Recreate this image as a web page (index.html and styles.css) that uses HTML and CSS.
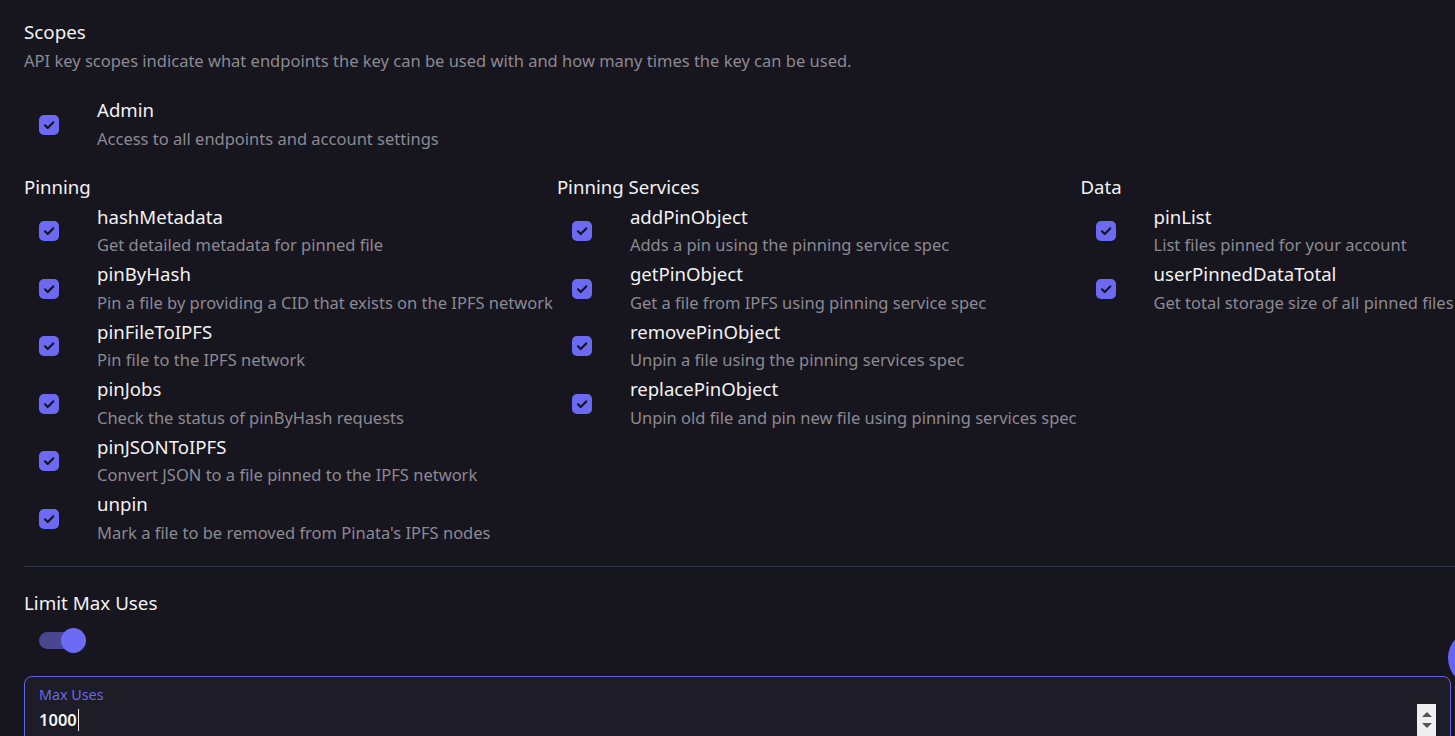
FILE: index.html
```html
<!DOCTYPE html>
<html lang="en">
<head>
<meta charset="utf-8">
<title>Scopes</title>
<link rel="stylesheet" href="styles.css">
</head>
<body>
<main class="page">
  <section class="scopes">
    <h2 class="section-title">Scopes</h2>
    <p class="section-sub">API key scopes indicate what endpoints the key can be used with and how many times the key can be used.</p>

    <div class="admin">
      <label class="scope">
        <span class="check"><svg viewBox="0 0 20 20" width="20" height="20"><path d="M6 10.3l2.7 2.7L14.2 7.4" fill="none" stroke="#17151f" stroke-width="2.2" stroke-linecap="round" stroke-linejoin="round"/></svg></span>
        <span class="scope-text"><span class="scope-name">Admin</span><span class="scope-desc">Access to all endpoints and account settings</span></span>
      </label>
    </div>

    <div class="groups">
      <div class="group">
        <h3 class="group-title">Pinning</h3>
        <label class="scope">
          <span class="check"><svg viewBox="0 0 20 20" width="20" height="20"><path d="M6 10.3l2.7 2.7L14.2 7.4" fill="none" stroke="#17151f" stroke-width="2.2" stroke-linecap="round" stroke-linejoin="round"/></svg></span>
          <span class="scope-text"><span class="scope-name">hashMetadata</span><span class="scope-desc">Get detailed metadata for pinned file</span></span>
        </label>
        <label class="scope">
          <span class="check"><svg viewBox="0 0 20 20" width="20" height="20"><path d="M6 10.3l2.7 2.7L14.2 7.4" fill="none" stroke="#17151f" stroke-width="2.2" stroke-linecap="round" stroke-linejoin="round"/></svg></span>
          <span class="scope-text"><span class="scope-name">pinByHash</span><span class="scope-desc">Pin a file by providing a CID that exists on the IPFS network</span></span>
        </label>
        <label class="scope">
          <span class="check"><svg viewBox="0 0 20 20" width="20" height="20"><path d="M6 10.3l2.7 2.7L14.2 7.4" fill="none" stroke="#17151f" stroke-width="2.2" stroke-linecap="round" stroke-linejoin="round"/></svg></span>
          <span class="scope-text"><span class="scope-name">pinFileToIPFS</span><span class="scope-desc">Pin file to the IPFS network</span></span>
        </label>
        <label class="scope">
          <span class="check"><svg viewBox="0 0 20 20" width="20" height="20"><path d="M6 10.3l2.7 2.7L14.2 7.4" fill="none" stroke="#17151f" stroke-width="2.2" stroke-linecap="round" stroke-linejoin="round"/></svg></span>
          <span class="scope-text"><span class="scope-name">pinJobs</span><span class="scope-desc">Check the status of pinByHash requests</span></span>
        </label>
        <label class="scope">
          <span class="check"><svg viewBox="0 0 20 20" width="20" height="20"><path d="M6 10.3l2.7 2.7L14.2 7.4" fill="none" stroke="#17151f" stroke-width="2.2" stroke-linecap="round" stroke-linejoin="round"/></svg></span>
          <span class="scope-text"><span class="scope-name">pinJSONToIPFS</span><span class="scope-desc">Convert JSON to a file pinned to the IPFS network</span></span>
        </label>
        <label class="scope">
          <span class="check"><svg viewBox="0 0 20 20" width="20" height="20"><path d="M6 10.3l2.7 2.7L14.2 7.4" fill="none" stroke="#17151f" stroke-width="2.2" stroke-linecap="round" stroke-linejoin="round"/></svg></span>
          <span class="scope-text"><span class="scope-name">unpin</span><span class="scope-desc">Mark a file to be removed from Pinata's IPFS nodes</span></span>
        </label>
      </div>

      <div class="group">
        <h3 class="group-title">Pinning Services</h3>
        <label class="scope">
          <span class="check"><svg viewBox="0 0 20 20" width="20" height="20"><path d="M6 10.3l2.7 2.7L14.2 7.4" fill="none" stroke="#17151f" stroke-width="2.2" stroke-linecap="round" stroke-linejoin="round"/></svg></span>
          <span class="scope-text"><span class="scope-name">addPinObject</span><span class="scope-desc">Adds a pin using the pinning service spec</span></span>
        </label>
        <label class="scope">
          <span class="check"><svg viewBox="0 0 20 20" width="20" height="20"><path d="M6 10.3l2.7 2.7L14.2 7.4" fill="none" stroke="#17151f" stroke-width="2.2" stroke-linecap="round" stroke-linejoin="round"/></svg></span>
          <span class="scope-text"><span class="scope-name">getPinObject</span><span class="scope-desc">Get a file from IPFS using pinning service spec</span></span>
        </label>
        <label class="scope">
          <span class="check"><svg viewBox="0 0 20 20" width="20" height="20"><path d="M6 10.3l2.7 2.7L14.2 7.4" fill="none" stroke="#17151f" stroke-width="2.2" stroke-linecap="round" stroke-linejoin="round"/></svg></span>
          <span class="scope-text"><span class="scope-name">removePinObject</span><span class="scope-desc">Unpin a file using the pinning services spec</span></span>
        </label>
        <label class="scope">
          <span class="check"><svg viewBox="0 0 20 20" width="20" height="20"><path d="M6 10.3l2.7 2.7L14.2 7.4" fill="none" stroke="#17151f" stroke-width="2.2" stroke-linecap="round" stroke-linejoin="round"/></svg></span>
          <span class="scope-text"><span class="scope-name">replacePinObject</span><span class="scope-desc">Unpin old file and pin new file using pinning services spec</span></span>
        </label>
      </div>

      <div class="group">
        <h3 class="group-title">Data</h3>
        <label class="scope">
          <span class="check"><svg viewBox="0 0 20 20" width="20" height="20"><path d="M6 10.3l2.7 2.7L14.2 7.4" fill="none" stroke="#17151f" stroke-width="2.2" stroke-linecap="round" stroke-linejoin="round"/></svg></span>
          <span class="scope-text"><span class="scope-name">pinList</span><span class="scope-desc">List files pinned for your account</span></span>
        </label>
        <label class="scope">
          <span class="check"><svg viewBox="0 0 20 20" width="20" height="20"><path d="M6 10.3l2.7 2.7L14.2 7.4" fill="none" stroke="#17151f" stroke-width="2.2" stroke-linecap="round" stroke-linejoin="round"/></svg></span>
          <span class="scope-text"><span class="scope-name">userPinnedDataTotal</span><span class="scope-desc">Get total storage size of all pinned files</span></span>
        </label>
      </div>
    </div>
  </section>

  <hr class="divider">

  <section class="limit">
    <h2 class="section-title">Limit Max Uses</h2>
    <div class="switch"><span class="switch-track"></span><span class="switch-thumb"></span></div>
    <div class="field">
      <span class="field-label">Max Uses</span>
      <span class="field-value">1000<span class="caret"></span></span>
      <span class="spinner"><span class="tri up"></span><span class="tri down"></span></span>
    </div>
  </section>

  <span class="fab"></span>
</main>
</body>
</html>
```

FILE: styles.css
```css
* { box-sizing: border-box; }

html, body {
  margin: 0;
  padding: 0;
  background: #17151e;
  overflow: hidden;
}

body {
  font-family: "Noto Sans", "Open Sans", sans-serif;
  color: #f2f2f4;
  width: 1455px;
  height: 736px;
}

.page {
  position: relative;
  padding: 18px 0 0 24px;
  height: 736px;
}

.section-title {
  margin: 0;
  font-size: 18.8px;
  font-weight: 400;
  line-height: 28px;
  color: #f2f2f4;
}

.section-sub {
  margin: 3px 0 0;
  font-size: 16.5px;
  line-height: 24px;
  color: #8b8a92;
}

.admin {
  margin-top: 23px;
}

.scope {
  display: flex;
  align-items: center;
}

.check {
  flex: none;
  width: 20px;
  height: 20px;
  margin: 0 38px 0 15px;
  border-radius: 5px;
  background: #6c69f2;
  display: flex;
}

.scope-text {
  display: flex;
  flex-direction: column;
}

.scope-name {
  font-size: 18.6px;
  line-height: 28.75px;
  color: #f2f2f4;
}

.scope-desc {
  font-size: 16.5px;
  line-height: 28.75px;
  color: #8b8a92;
}

.groups {
  display: flex;
  gap: 4px;
  margin-top: 19px;
}

.group-title {
  margin: 0 0 2px;
  font-size: 18.6px;
  font-weight: 400;
  line-height: 28px;
  color: #f2f2f4;
}

.divider {
  border: 0;
  border-top: 1px solid #2d3142;
  margin: 18px 0 0;
}

.limit {
  padding-top: 22px;
}

.switch {
  position: relative;
  width: 48px;
  height: 25px;
  margin: 11px 0 0 15px;
}

.switch-track {
  position: absolute;
  left: 0;
  top: 4px;
  width: 42px;
  height: 17px;
  border-radius: 9px;
  background: #4a4690;
}

.switch-thumb {
  position: absolute;
  left: 22px;
  top: 0;
  width: 25px;
  height: 25px;
  border-radius: 50%;
  background: #6b6bf4;
}

.field {
  position: relative;
  margin: 23px 4px 0 0;
  height: 80px;
  border: 1px solid #6463e4;
  border-radius: 8px;
  background: #1e1c26;
  padding: 8px 14px;
  display: flex;
  flex-direction: column;
}

.field-label {
  font-size: 14.3px;
  line-height: 20px;
  color: #6a68e8;
}

.field-value {
  margin-top: 1px;
  font-size: 16.5px;
  line-height: 28px;
  font-weight: 600;
  color: #f4f4f6;
  display: flex;
  align-items: center;
}

.caret {
  display: inline-block;
  width: 1.5px;
  height: 22px;
  background: #f4f4f6;
  margin-left: 1px;
}

.spinner {
  position: absolute;
  right: 14px;
  top: 27px;
  width: 19px;
  height: 32px;
  background: #efefef;
  display: flex;
  flex-direction: column;
  align-items: center;
  justify-content: center;
  gap: 6px;
}

.tri {
  width: 0;
  height: 0;
  border-left: 5px solid transparent;
  border-right: 5px solid transparent;
}

.tri.up { border-bottom: 5px solid #555; }
.tri.down { border-top: 5px solid #555; }

.fab {
  position: absolute;
  left: 1448px;
  top: 630px;
  width: 56px;
  height: 56px;
  border-radius: 50%;
  background: #6366f1;
}
```
